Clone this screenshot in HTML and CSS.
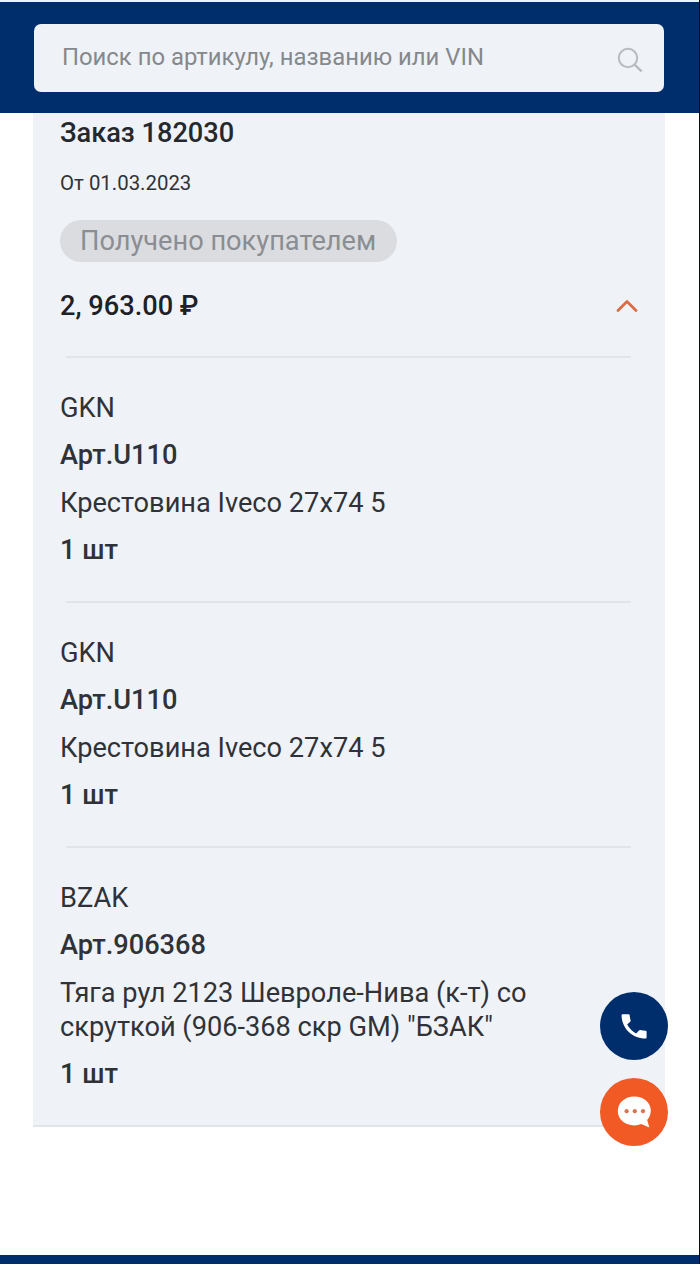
FILE: index.html
```html
<!DOCTYPE html>
<html lang="ru">
<head>
<meta charset="utf-8">
<title>Заказ 182030</title>
<link rel="stylesheet" href="styles.css">
</head>
<body>
<div class="screen">
  <header class="header">
    <div class="search">
      <span class="search-text">Поиск по артикулу, названию или VIN</span>
      <svg class="search-icon" width="26" height="26" viewBox="0 0 26 26" fill="none" stroke="#b7babe" stroke-width="2"><circle cx="11" cy="11" r="9.2"/><path d="M17.6 17.6L24.6 24.4" stroke-width="2.4"/></svg>
    </div>
  </header>
  <main class="main">
    <section class="order">
      <h1 class="order-title">Заказ 182030</h1>
      <div class="order-date">От 01.03.2023</div>
      <div class="status">Получено покупателем</div>
      <div class="total">
        <span>2, 963.00 ₽</span>
        <svg class="chevron" width="22" height="14" viewBox="0 0 22 14" fill="none" stroke="#dc6c43" stroke-width="2.8" stroke-linecap="round" stroke-linejoin="round"><path d="M2 11.6L11 2.6L20 11.6"/></svg>
      </div>
      <article class="item">
        <div class="brand">GKN</div>
        <div class="article">Арт.U110</div>
        <div class="name">Крестовина Iveco 27x74 5</div>
        <div class="qty">1 шт</div>
      </article>
      <article class="item">
        <div class="brand">GKN</div>
        <div class="article">Арт.U110</div>
        <div class="name">Крестовина Iveco 27x74 5</div>
        <div class="qty">1 шт</div>
      </article>
      <article class="item">
        <div class="brand">BZAK</div>
        <div class="article">Арт.906368</div>
        <div class="name">Тяга рул 2123 Шевроле-Нива (к-т) со<br>скруткой (906-368 скр GM) "БЗАК"</div>
        <div class="qty">1 шт</div>
      </article>
    </section>
  </main>
  <footer class="footer"></footer>
  <div class="actions">
    <div class="action action-call">
      <svg width="68" height="68" viewBox="0 0 68 68"><path fill="#fff" d="M22.6 22.2H28.6Q29.6 22.2 29.7 23.2Q29.9 26 30.6 28.4Q30.8 29.2 30.2 29.8L27.2 32.6Q30.4 38.6 36.1 41.4L39 38.4Q39.7 37.8 40.5 38Q43 38.7 45.6 38.8Q46.6 38.9 46.6 39.9V45.6Q46.6 46.6 45.6 46.6C31.5 46.6 21.6 35.5 21.6 23.2Q21.6 22.2 22.6 22.2Z"/></svg>
    </div>
    <div class="action action-chat">
      <svg width="68" height="68" viewBox="0 0 68 68"><path fill="#fff" d="M34.3 18.6C43.5 18.6 50.8 24.6 50.8 32.6C50.8 36.4 49.4 39.6 47.2 42L49.4 49.4L41.2 46.1C39 47 36.8 47.4 34.3 47.4C25 47.4 17.8 41.2 17.8 33C17.8 24.8 25 18.6 34.3 18.6Z"/><g fill="#d9744c"><circle cx="26.6" cy="33.2" r="2.1"/><circle cx="34.8" cy="33.2" r="2.1"/><circle cx="43" cy="33.2" r="2.1"/></g></svg>
    </div>
  </div>
</div>
</body>
</html>
```
FILE: styles.css
```css
* { box-sizing: border-box; }
body { margin: 0; background: #fff; font-family: Roboto, "Noto Sans", sans-serif; color: #2f3237; }
.screen { position: relative; display: flex; flex-direction: column; height: 1264px; border-right: 1px solid #0b0c0e; overflow: hidden; }
.header { height: 113px; padding: 22px 35px 0 34px; background: #002e6d; border-top: 2px solid #e6f6fb; }
.search { display: flex; align-items: center; justify-content: space-between; height: 68px; padding: 0 21px 2px 28px; border-radius: 7px; background: #eff3f8; }
.search-text { font-size: 23.85px; color: #85888c; white-space: nowrap; }
.search-icon { margin-top: 6px; }
.main { flex: 1; padding: 0 34px 0 33px; }
.order { height: 1014px; padding: 3px 27px 0; background: #eff3f8; border-bottom: 2px solid #e1e4e9; }
.order-title { margin: 0; font-size: 27.2px; line-height: 34px; font-weight: 500; color: #25282d; }
.order-date { margin-top: 19px; font-size: 20.4px; line-height: 28px; }
.status { display: flex; align-items: center; width: 337px; height: 42px; margin-top: 23px; padding: 0 20px; border-radius: 21px; background: #dadce0; color: #8a8d91; font-size: 27.2px; white-space: nowrap; }
.total { display: flex; align-items: center; justify-content: space-between; height: 34px; margin: 27px 0 33px; font-size: 27.2px; font-weight: 500; color: #1e2126; }
.item { position: relative; display: flex; flex-direction: column; gap: 13.4px; height: 245px; padding-top: 35px; font-size: 27.2px; line-height: 34px; white-space: nowrap; }
.item::before { content: ""; position: absolute; top: 0; left: 6px; right: 7px; height: 2px; background: #e1e5ea; }
.article, .qty { font-weight: 500; }
.footer { height: 9px; background: #002e6d; }
.actions { position: absolute; left: 600px; top: 992px; display: flex; flex-direction: column; gap: 18px; }
.action { width: 68px; height: 68px; border-radius: 50%; }
.action svg { display: block; }
.action-call { background: #002e6d; }
.action-chat { background: #f15a24; }
```
